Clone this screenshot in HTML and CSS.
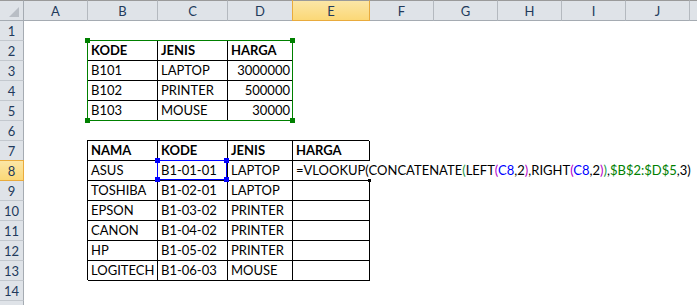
FILE: index.html
```html
<!DOCTYPE html>
<html>
<head>
<meta charset="utf-8">
<link rel="stylesheet" href="styles.css">
</head>
<body>
<div class="sheet">
  <div class="corner"><span class="tri"></span></div>
  <div class="ch">A</div>
  <div class="ch">B</div>
  <div class="ch">C</div>
  <div class="ch">D</div>
  <div class="ch cur">E</div>
  <div class="ch">F</div>
  <div class="ch">G</div>
  <div class="ch">H</div>
  <div class="ch">I</div>
  <div class="ch">J</div>
  <div class="ch">K</div>

  <div class="rh">1</div>
  <div class="rh">2</div>
  <div class="rh">3</div>
  <div class="rh">4</div>
  <div class="rh">5</div>
  <div class="rh">6</div>
  <div class="rh">7</div>
  <div class="rh cur">8</div>
  <div class="rh">9</div>
  <div class="rh">10</div>
  <div class="rh">11</div>
  <div class="rh">12</div>
  <div class="rh">13</div>
  <div class="rh">14</div>
  <div class="rh">15</div>

  <div class="tbl t1">
    <div class="c b">KODE</div><div class="c b">JENIS</div><div class="c b">HARGA</div>
    <div class="c">B101</div><div class="c">LAPTOP</div><div class="c n">3000000</div>
    <div class="c">B102</div><div class="c">PRINTER</div><div class="c n">500000</div>
    <div class="c">B103</div><div class="c">MOUSE</div><div class="c n">30000</div>
    <div class="range green">
      <span class="h tl"></span><span class="h tr"></span><span class="h bl"></span><span class="h br"></span>
    </div>
  </div>

  <div class="tbl t2">
    <div class="c b">NAMA</div><div class="c b">KODE</div><div class="c b">JENIS</div><div class="c b">HARGA</div>
    <div class="c">ASUS</div>
    <div class="c ref">B1-01-01<div class="range blue"><span class="h tl"></span><span class="h tr"></span><span class="h bl"></span><span class="h br"></span></div></div>
    <div class="c">LAPTOP</div>
    <div class="c active"><span class="f">=VLOOKUP(CONCATENATE<span class="p1">(</span>LEFT<span class="p2">(</span><span class="rb">C8</span>,2<span class="p2">)</span>,RIGHT<span class="p2">(</span><span class="rb">C8</span>,2<span class="p2">)</span><span class="p1">)</span>,<span class="rg">$B$2:$D$5</span>,3)</span><span class="fill"></span></div>
    <div class="c">TOSHIBA</div><div class="c">B1-02-01</div><div class="c">LAPTOP</div><div class="c"></div>
    <div class="c">EPSON</div><div class="c">B1-03-02</div><div class="c">PRINTER</div><div class="c"></div>
    <div class="c">CANON</div><div class="c">B1-04-02</div><div class="c">PRINTER</div><div class="c"></div>
    <div class="c">HP</div><div class="c">B1-05-02</div><div class="c">PRINTER</div><div class="c"></div>
    <div class="c">LOGITECH</div><div class="c">B1-06-03</div><div class="c">MOUSE</div><div class="c"></div>
  </div>
</div>
</body>
</html>
```

FILE: styles.css
```css
html, body {
  margin: 0;
  padding: 0;
  background: #fff;
  overflow: hidden;
}

.sheet {
  width: 697px;
  height: 305px;
  overflow: hidden;
  display: grid;
  grid-template-columns: 24px 64px 70px 70px 65px 77px 64px 64px 64px 64px 64px 64px;
  grid-template-rows: 21px repeat(15, 20px);
  font-family: "Lato", "Liberation Sans", sans-serif;
  font-size: 13px;
  color: #000;
}

.corner, .ch, .rh {
  box-sizing: border-box;
  background: #dfe3e8;
  color: #223a5c;
  display: flex;
  align-items: center;
  justify-content: center;
}

.corner {
  border-top: 1px solid #9a9a9a;
  border-right: 1px solid #a5abb2;
  border-bottom: 1px solid #a5abb2;
  position: relative;
}

.tri {
  position: absolute;
  right: 4px;
  bottom: 3px;
  width: 0;
  height: 0;
  border-left: 10px solid transparent;
  border-bottom: 10px solid #b9bec5;
}

.ch {
  border-top: 1px solid #9a9a9a;
  border-right: 1px solid #b4b9bf;
  border-bottom: 1px solid #a5abb2;
  padding-top: 1px;
}

.rh {
  grid-column: 1;
  border-right: 1px solid #a5abb2;
  border-bottom: 1px solid #c3c8ce;
  padding-top: 1px;
}

.ch.cur {
  background: linear-gradient(#fbe6a6, #fbd877);
  border-right-color: #e9ab3d;
  border-bottom-color: #e9ab3d;
  box-shadow: -1px 0 0 #e9ab3d;
}

.rh.cur {
  background: linear-gradient(#fbe6a6, #fbd877);
  border-right-color: #e9ab3d;
  border-bottom-color: #e9ab3d;
  box-shadow: 0 -1px 0 #e9ab3d;
}

.tbl {
  display: grid;
  grid-auto-rows: 20px;
  position: relative;
  box-shadow: -1px -1px 0 #000;
}

.t1 {
  grid-column: 3 / 6;
  grid-row: 3 / 7;
  grid-template-columns: 70px 70px 65px;
}

.t2 {
  grid-column: 3 / 7;
  grid-row: 8 / 15;
  grid-template-columns: 70px 70px 65px 77px;
}

.c {
  box-sizing: border-box;
  border-right: 1px solid #000;
  border-bottom: 1px solid #000;
  padding: 0 2px 2px 3px;
  display: flex;
  align-items: flex-end;
  line-height: 15px;
  white-space: nowrap;
}

.c.b { font-weight: bold; }
.c.n { justify-content: flex-end; }

.c.ref, .c.active { position: relative; }

.c.active { border-right-color: transparent; }

.range {
  position: absolute;
  top: -1px;
  left: -1px;
  right: 0;
  bottom: 0;
  border: 1px solid;
  pointer-events: none;
}

.range.green { border-color: #008000; }
.range.green .h { background: #008000; }
.range.blue { border-color: #0000ff; }
.range.blue .h { background: #0000ff; }

.h {
  position: absolute;
  width: 5px;
  height: 5px;
}
.h.tl { top: -3px; left: -3px; }
.h.tr { top: -3px; right: -3px; }
.h.bl { bottom: -3px; left: -3px; }
.h.br { bottom: -3px; right: -3px; }

.fill {
  position: absolute;
  right: -2px;
  bottom: -2px;
  width: 3px;
  height: 3px;
  background: #000;
}

.f { position: relative; z-index: 1; }
.p1 { color: #1a9a4a; }
.p2 { color: #b400c8; }
.rb { color: #0000ff; }
.rg { color: #008000; }
```
